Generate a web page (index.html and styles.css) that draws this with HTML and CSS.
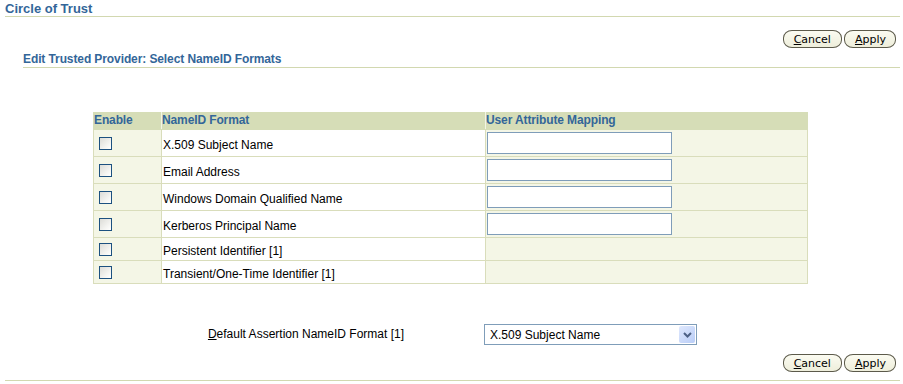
FILE: index.html
```html
<!DOCTYPE html>
<html>
<head>
<meta charset="utf-8">
<link rel="stylesheet" href="styles.css">
</head>
<body>
<div class="page">
  <div class="title">Circle of Trust</div>
  <div class="btnbar top">
    <button class="btn"><u>C</u>ancel</button>
    <button class="btn apply"><u>A</u>pply</button>
  </div>
  <div class="subtitle">Edit Trusted Provider: Select NameID Formats</div>
  <table class="grid">
    <colgroup>
      <col class="w-en">
      <col class="w-fmt">
      <col class="w-map">
    </colgroup>
    <thead>
      <tr>
        <th>Enable</th>
        <th>NameID Format</th>
        <th>User Attribute Mapping</th>
      </tr>
    </thead>
    <tbody>
      <tr class="tall">
        <td class="c-en"><span class="cb"></span></td>
        <td class="c-fmt">X.509 Subject Name</td>
        <td class="c-map"><span class="inp"></span></td>
      </tr>
      <tr class="tall">
        <td class="c-en"><span class="cb"></span></td>
        <td class="c-fmt">Email Address</td>
        <td class="c-map"><span class="inp"></span></td>
      </tr>
      <tr class="tall">
        <td class="c-en"><span class="cb"></span></td>
        <td class="c-fmt">Windows Domain Qualified Name</td>
        <td class="c-map"><span class="inp"></span></td>
      </tr>
      <tr class="tall">
        <td class="c-en"><span class="cb"></span></td>
        <td class="c-fmt">Kerberos Principal Name</td>
        <td class="c-map"><span class="inp"></span></td>
      </tr>
      <tr class="short">
        <td class="c-en"><span class="cb"></span></td>
        <td class="c-fmt">Persistent Identifier [1]</td>
        <td class="c-map"></td>
      </tr>
      <tr class="short">
        <td class="c-en"><span class="cb"></span></td>
        <td class="c-fmt">Transient/One-Time Identifier [1]</td>
        <td class="c-map"></td>
      </tr>
    </tbody>
  </table>
  <div class="defrow">
    <div class="deflabel"><u>D</u>efault Assertion NameID Format [1]</div>
    <div class="sel">
      <span class="seltext">X.509 Subject Name</span>
      <span class="selbtn"><svg width="9" height="6" viewBox="0 0 9 6"><path d="M1 1 L4.5 4.5 L8 1" fill="none" stroke="#4d6185" stroke-width="2"/></svg></span>
    </div>
  </div>
  <div class="btnbar bottom">
    <button class="btn"><u>C</u>ancel</button>
    <button class="btn apply"><u>A</u>pply</button>
  </div>
  <div class="rule"></div>
</div>
</body>
</html>
```

FILE: styles.css
```css
html, body {
  margin: 0;
  padding: 0;
  background: #ffffff;
}
.page {
  width: 903px;
  font-family: "Liberation Sans", Arial, sans-serif;
  font-size: 12px;
  color: #000;
}
.title {
  margin: 1px 3px 0 5px;
  font-size: 13px;
  font-weight: bold;
  line-height: 15px;
  color: #336699;
  border-bottom: 1px solid #d2d8b0;
}
.btnbar {
  display: flex;
  justify-content: flex-end;
  gap: 2px;
  padding-right: 7px;
}
.btnbar.top {
  margin-top: 13px;
}
.btnbar.bottom {
  margin-top: 9px;
}
.btn {
  height: 18px;
  padding: 0 10px 0 10px;
  margin: 0;
  font-family: "DejaVu Sans", Tahoma, sans-serif;
  font-size: 11px;
  line-height: 15px;
  color: #000;
  background: linear-gradient(#fbfbf1, #eeeedb);
  border: 1px solid #5c5a4a;
  border-radius: 9px / 8px;
}
.btn.apply {
  padding-right: 9px;
}
.btn u {
  text-decoration: underline;
}
.subtitle {
  margin: 4px 3px 0 23px;
  font-size: 12px;
  font-weight: bold;
  letter-spacing: -0.1px;
  line-height: 15px;
  color: #336699;
  border-bottom: 1px solid #d2d8b0;
}
.grid {
  margin: 44px 0 0 93px;
  border-collapse: collapse;
  width: 714px;
  table-layout: fixed;
}
.w-en { width: 68px; }
.w-fmt { width: 324px; }
.w-map { width: 322px; }
.grid th {
  background: #d6ddb7;
  color: #336699;
  font-weight: bold;
  font-size: 12px;
  letter-spacing: -0.12px;
  text-align: left;
  height: 17px;
  padding: 0 1px 0 0;
  line-height: 17px;
  border-left: 1px solid #f3f5e5;
  border-bottom: 1px solid #d6ddb7;
}
.grid th:first-child {
  border-left: 1px solid #d6ddb7;
}
.grid td {
  border: 1px solid #d9ddbb;
  padding: 0 1px;
  vertical-align: middle;
  box-sizing: border-box;
}
td.c-fmt {
  padding-top: 4px;
  background: #ffffff;
}
td.c-en, td.c-map {
  background: #f4f6e6;
}
tr.tall td { height: 27px; }
tr.short td { height: 23px; }
.cb {
  display: block;
  width: 11px;
  height: 11px;
  margin-left: 4px;
  border: 1px solid #1c5180;
  background: linear-gradient(135deg, #dcdcd7 0%, #f6f6f3 70%, #ffffff 100%);
}
.inp {
  display: block;
  width: 183px;
  height: 20px;
  border: 1px solid #7f9db9;
  background: #ffffff;
}
.defrow {
  display: grid;
  grid-template-columns: 404px 213px;
  column-gap: 80px;
  align-items: center;
  margin-top: 40px;
}
.deflabel {
  text-align: right;
  font-size: 12px;
  line-height: 15px;
}
.sel {
  display: flex;
  align-items: center;
  justify-content: space-between;
  height: 19px;
  border: 1px solid #7f9db9;
  padding: 0 1px 0 5px;
  background: #fff;
}
.seltext {
  font-size: 12px;
}
.selbtn {
  display: flex;
  align-items: center;
  justify-content: center;
  width: 16px;
  height: 17px;
  border-radius: 2px;
  background: linear-gradient(135deg, #dfe8fd, #b9cdf7);
}
.rule {
  margin: 8px 3px 0 5px;
  border-top: 1px solid #d2d8b0;
}
```
